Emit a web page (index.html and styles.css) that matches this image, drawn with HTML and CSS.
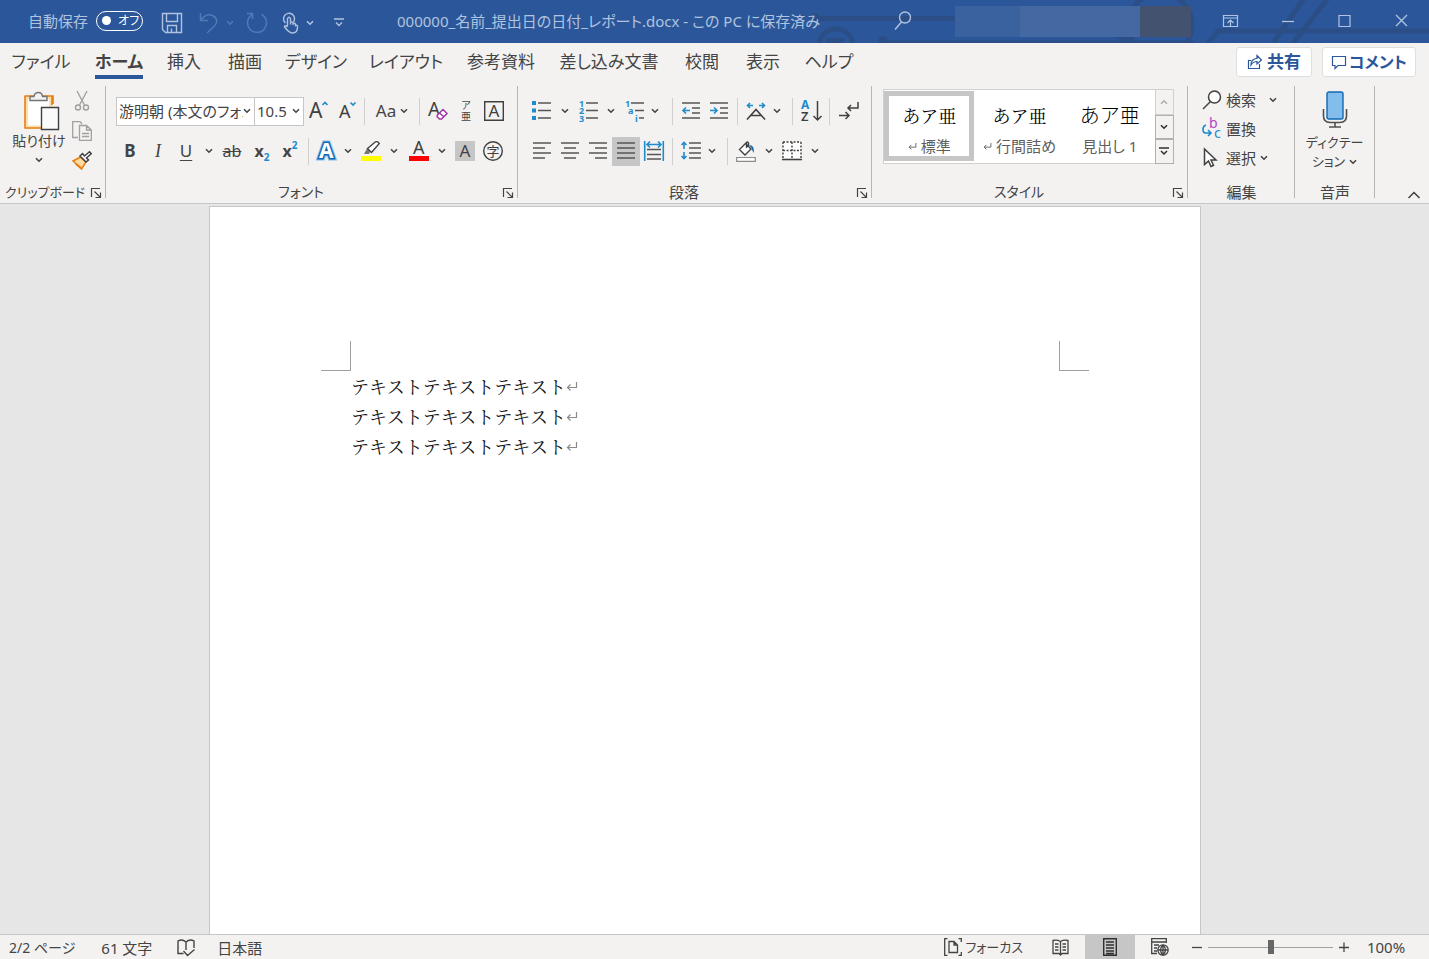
FILE: index.html
```html
<!DOCTYPE html>
<html lang="ja">
<head>
<meta charset="utf-8">
<title>000000_名前_提出日の日付_レポート.docx</title>
<link rel="stylesheet" href="styles.css">
</head>
<body>
<svg class="defs" aria-hidden="true">
  <symbol id="chev" viewBox="0 0 8 6"><path d="M1 1.2 4 4.2 7 1.2" fill="none" stroke="currentColor" stroke-width="1.6"/></symbol>
  <symbol id="launch" viewBox="0 0 12 12"><path d="M1.5 10V1.500H10M4.500 4.500 10 10M10.500 5.500V10.500H5.500" fill="none" stroke="currentColor" stroke-width="1.200"/></symbol>
  <symbol id="ret" viewBox="0 0 12 10"><path d="M10.500 1V6.500H1.500M4.500 3.500 1.500 6.500 4.500 9.500" fill="none" stroke="currentColor" stroke-width="1.200"/></symbol>
</svg>

<header class="titlebar">
  <svg class="circuit" width="614" height="43" viewBox="0 0 614 43" fill="none" stroke="#2b4e86" stroke-width="5" aria-hidden="true">
    <path d="M-1 18.500H180M72 43 75 43H380"/>
    <circle cx="0" cy="18" r="5" fill="#2b4e86" stroke="none"/>
    <circle cx="21" cy="46" r="17"/><path d="M11 40.500H29"/>
    <circle cx="68" cy="41" r="5" fill="#2b4e86" stroke="none"/>
    <circle cx="345" cy="25" r="32"/><path d="M325 48 300 34"/>
    <path d="M393 43 403 31H614M458 43 490-3M478 43 514-3"/>
  </svg>
  <div class="quick">
    <label class="autosave">自動保存
      <span class="toggle"><input type="checkbox">オフ</span>
    </label>
    <button class="tb" aria-label="上書き保存"><svg width="22" height="22" fill="none" stroke="currentColor" stroke-width="1.400"><path d="M1.500 1.500H20.500V20.500H4.500L1.500 17.500ZM5.500 1.500V9.500H16.500V1.500M6.500 20V13.500H15.500V20M10.500 20V16.500"/></svg></button>
    <button class="tb dim undo" aria-label="元に戻す"><svg width="20" height="22" fill="none" stroke="currentColor" stroke-width="1.500"><path d="M1.500 1V8.500H9M1.500 8.500C5 4 9 1.500 13.500 3.500 18.500 6 19 10.500 15.500 14L8 21"/></svg><svg class="chev"><use href="#chev"/></svg></button>
    <button class="tb dim redo" aria-label="やり直し"><svg width="22" height="22" fill="none" stroke="currentColor" stroke-width="1.500"><path d="M1 1.500H6.500V7M6.500 2.500A9.500 9.500 0 1 0 15.500 2.500"/></svg></button>
    <button class="tb touch" aria-label="タッチ/マウス モード"><svg width="17" height="22" fill="none" stroke="currentColor" stroke-width="1.400"><path d="M3.500 11A5.500 5.500 0 1 1 11.500 10"/><path d="M5.500 14V6.500Q7 4 8.500 6.500V12.500M8.500 10.500Q10 9 11 11V13M11 11.500Q13 10.500 13.500 12.500V13.500Q15.500 12.500 15.500 15C15.500 19 14 21 10.500 21 7 21 6 19 2.500 15Q2.500 12.500 5.500 15"/></svg><svg class="chev"><use href="#chev"/></svg></button>
    <button class="tb more" aria-label="クイック アクセスのカスタマイズ"><svg width="10" height="9" fill="none" stroke="currentColor" stroke-width="1.400"><path d="M0 1H10M2 4.500 5 7.500 8 4.500"/></svg></button>
  </div>
  <div class="doc-title">000000_名前_提出日の日付_レポート.docx - この PC に保存済み</div>
  <div class="win">
    <button class="tb search" aria-label="検索"><svg width="18" height="20" fill="none" stroke="currentColor" stroke-width="1.400"><circle cx="11" cy="6.500" r="5.500"/><path d="M7.500 11 1 18.500"/></svg></button>
    <div class="account"><i class="a1"></i><i class="a2"></i><i class="a3"></i></div>
    <button class="tb ctl" aria-label="リボンの表示オプション"><svg width="17" height="14" fill="none" stroke="currentColor" stroke-width="1.200"><path d="M1.500 1.500H15.500V12.500H1.500ZM1.500 4H15.500M8.500 12V6.500M5.500 9 8.500 6 11.500 9"/></svg></button>
    <button class="tb ctl" aria-label="最小化"><svg width="12" height="12" stroke="currentColor" stroke-width="1.300"><path d="M0 6.500H12"/></svg></button>
    <button class="tb ctl" aria-label="最大化"><svg width="13" height="14" fill="none" stroke="currentColor" stroke-width="1.200"><path d="M1 1.500H12V12.500H1Z"/></svg></button>
    <button class="tb ctl" aria-label="閉じる"><svg width="13" height="13" stroke="currentColor" stroke-width="1.300"><path d="M1 1 12 12M12 1 1 12"/></svg></button>
  </div>
</header>

<nav class="tabs">
  <div class="tablist">
    <button>ファイル</button><button class="active">ホーム</button><button>挿入</button><button>描画</button><button>デザイン</button><button>レイアウト</button><button>参考資料</button><button>差し込み文書</button><button>校閲</button><button>表示</button><button>ヘルプ</button>
  </div>
  <div class="actions">
    <button><svg width="16" height="16" fill="none" stroke="currentColor" stroke-width="1.200"><path d="M4 6.500H1.500V14.500H12.500V10M4 11C4 7 6 4.500 10 4.500V1.500L14.500 6 10 10V7.500C7 7.500 5.500 8.500 4 11Z"/></svg>共有</button>
    <button><svg width="16" height="16" fill="none" stroke="currentColor" stroke-width="1.200"><path d="M1.500 2.500H14.500V11.500H7L4 14.500V11.500H1.500Z"/></svg>コメント</button>
  </div>
</nav>

<main class="ribbon">
  <section class="group g-clip">
    <div class="body">
      <button class="paste"><svg class="board" width="36" height="40" fill="none"><path d="M2.500 6.500H26.500V36H2.500Z" fill="#fff" stroke="#fce0a8" stroke-width="3"/><path d="M1 5H29V13M1 4.500V37H17M28 5V14" stroke="#e67e17" stroke-width="1.600"/><path d="M6 9.500V5.500H10Q10.500 1.500 14.500 1.500 18 1.500 18.500 5.500H23V9.500Z" fill="#f3f2f1" stroke="#767676" stroke-width="1.400"/><path d="M17.500 16.500H34.500V38.500H17.500Z" fill="#fafafa" stroke="#404040" stroke-width="1.400"/></svg><span>貼り付け</span><svg class="chev"><use href="#chev"/></svg></button>
      <div class="clip-tools">
        <button aria-label="切り取り"><svg width="20" height="20" fill="none" stroke="#a0a0a0" stroke-width="1.400"><path d="M5 0 12.500 14M15 0 7.500 14"/><circle cx="6" cy="16.500" r="2.500"/><circle cx="14" cy="16.500" r="2.500"/></svg></button>
        <button aria-label="コピー"><svg width="20" height="20" fill="none" stroke="#a0a0a0" stroke-width="1.300"><path d="M6 16.500H.7V.7H8L10 3"/><path d="M7.500 4.500H14.500L19.300 9V19.300H7.500ZM14.500 4.500V9H19M10 12.500H17M10 15.500H17"/></svg></button>
        <button aria-label="書式のコピー"><svg width="20" height="19" fill="none" stroke-width="1.500"><path d="M1 10 8.500 6 14 11 9.500 18Z" fill="#fbdc9d" stroke="#e67e17"/><path d="M4 13 9 17" stroke="#e67e17" stroke-width="2"/><path d="M8 5 10.500 2.500 12.500 5 17.500.8 19.200 2.800 14.500 7 16.500 9 14 11Z" fill="#fff" stroke="#404040"/></svg></button>
      </div>
    </div>
    <footer>クリップボード<button aria-label="クリップボードの設定"><svg width="12" height="12"><use href="#launch"/></svg></button></footer>
  </section>

  <section class="group g-font">
    <div class="body rows">
      <div class="row">
        <div class="combo face"><select aria-label="フォント"><option>游明朝 (本文のフォント)</option></select><svg class="chev"><use href="#chev"/></svg></div>
        <div class="combo size"><select aria-label="フォント サイズ"><option>10.5</option></select><svg class="chev"><use href="#chev"/></svg></div>
        <button class="ic" aria-label="フォント サイズの拡大"><svg width="20" height="24"><text x="1" y="19" font-size="21">A</text><path d="M14.500 6 17 3.500 19.500 6" class="bl"/></svg></button>
        <button class="ic" aria-label="フォント サイズの縮小"><svg width="20" height="24"><text x="3" y="19" font-size="18">A</text><path d="M14.500 3.500 17 6 19.500 3.500" class="bl"/></svg></button>
        <span class="sep"></span>
        <button class="wide" aria-label="文字種の変換"><span class="aa">Aa</span><svg class="chev"><use href="#chev"/></svg></button>
        <span class="sep"></span>
        <button class="ic" aria-label="書式のクリア"><svg width="20" height="22"><text x="0" y="16" font-size="19">A</text><path d="M9.500 15 15 9.500 19 13.500 13.500 19H11.500L9 16.500ZM11.500 13 16 17" fill="#fff" stroke="#a238a5" stroke-width="1.500"/></svg></button>
        <button class="ic ruby"><span>ア</span><span>亜</span></button>
        <button class="ic" aria-label="囲み線"><svg width="20" height="20"><path d="M.7.700H19.300V19.300H.7Z" fill="none" stroke="#404040" stroke-width="1.400"/><text x="4.500" y="16" font-size="17">A</text></svg></button>
      </div>
      <div class="row">
        <button class="ic b">B</button><button class="ic i">I</button><button class="ic u">U</button><button class="dd" aria-label="下線の種類"><svg class="chev"><use href="#chev"/></svg></button>
        <button class="ic s">ab</button><button class="ic x g2">x<sub>2</sub></button><button class="ic x">x<sup>2</sup></button>
        <span class="sep"></span>
        <button class="ic" aria-label="文字の効果"><svg width="20" height="22"><text class="glow" x="2" y="18">A</text><text class="outline" x="2" y="18">A</text></svg></button><button class="dd n" aria-label="文字の効果の一覧"><svg class="chev"><use href="#chev"/></svg></button>
        <button class="ic g2" aria-label="蛍光ペン"><svg width="20" height="21"><path d="M0 15H20V20H0Z" fill="#ff0"/><path d="M3 13 6 7.500 9 11 8 13Z" fill="#767676"/><path d="M6.500 7.500 14.500.8Q17 0 18.300 2.500L10.500 11.500Z" fill="#fff" stroke="#404040" stroke-width="1.400"/></svg></button><button class="dd" aria-label="蛍光ペンの色"><svg class="chev"><use href="#chev"/></svg></button>
        <button class="ic g2" aria-label="フォントの色"><svg width="20" height="21"><text x="4" y="13" font-size="18">A</text><path d="M0 15H20V20H0Z" fill="#f00"/></svg></button><button class="dd" aria-label="フォントの色の一覧"><svg class="chev"><use href="#chev"/></svg></button>
        <button class="ic" aria-label="文字の網かけ"><svg width="20" height="20"><path d="M0 0H20V20H0Z" fill="#c6c6c6"/><text x="4.500" y="16" font-size="17">A</text></svg></button>
        <button class="ic" aria-label="囲い文字"><svg width="20" height="20"><circle cx="10" cy="10" r="9.300" fill="none" stroke="#404040" stroke-width="1.400"/><text x="3.500" y="15" font-size="13">字</text></svg></button>
      </div>
    </div>
    <footer><span class="kana">フォント</span><button aria-label="フォントの設定"><svg width="12" height="12"><use href="#launch"/></svg></button></footer>
  </section>

  <section class="group g-para">
    <div class="body rows">
      <div class="row">
        <button class="ic" aria-label="箇条書き"><svg width="20" height="20"><path d="M0 0H4V4H0ZM0 7.500H4V11.500H0ZM0 15H4V19H0Z" fill="#1e8bcd"/><path d="M6 2H19M6 9.500H19M6 17H19" class="ln"/></svg></button><button class="dd" aria-label="行頭文字"><svg class="chev"><use href="#chev"/></svg></button>
        <button class="ic" aria-label="段落番号"><svg width="20" height="22"><g class="num"><text x="1" y="7">1</text><text x="1" y="14">2</text><text x="1" y="21.500">3</text></g><path d="M8 3H20M8 10.500H20M8 18H20" class="ln"/></svg></button><button class="dd" aria-label="番号書式"><svg class="chev"><use href="#chev"/></svg></button>
        <button class="ic" aria-label="アウトライン"><svg width="20" height="22"><g class="num"><text x="1" y="7">1</text><text x="4" y="14">a</text><text x="11" y="21.500">i</text></g><path d="M7 3H20M11 10.500H20M15 18H20" class="ln"/></svg></button><button class="dd n" aria-label="リスト"><svg class="chev"><use href="#chev"/></svg></button>
        <span class="sep wider"></span>
        <button class="ic" aria-label="インデントを減らす"><svg width="20" height="20"><path d="M1 2H19M11 7H19M11 12H19M1 17H19" class="ln"/><path d="M9 9.500H2M5 6.500 2 9.500 5 12.500" class="bl"/></svg></button>
        <button class="ic" aria-label="インデントを増やす"><svg width="20" height="20"><path d="M1 2H19M11 7H19M11 12H19M1 17H19" class="ln"/><path d="M1 9.500H8M5 6.500 8 9.500 5 12.500" class="bl"/></svg></button>
        <span class="sep"></span>
        <button class="ic" aria-label="拡張書式"><svg width="20" height="20"><path d="M1 18.500 10 8.500 19 18.500M5 14.500H15" fill="none" stroke="#404040" stroke-width="1.600"/><path d="M7 4.500H1.500M4 2 1.500 4.500 4 7M13 4.500H18.500M16 2 18.500 4.500 16 7" class="bl"/></svg></button><button class="dd n" aria-label="拡張書式の一覧"><svg class="chev"><use href="#chev"/></svg></button>
        <span class="sep far"></span>
        <button class="ic" aria-label="並べ替え"><svg width="21" height="22"><text class="az" x="0" y="9" font-size="12" font-weight="700">A</text><text x="0" y="21" font-size="13" font-weight="600">Z</text><path d="M16.500 1V20M12.500 16 16.500 20 20.500 16" class="dk"/></svg></button>
        <span class="sep"></span>
        <button class="ic" aria-label="編集記号"><svg width="21" height="20"><path d="M20 1V7H10M13 4 10 7 13 10M1 14.500H11M7.500 11 11 14.500 7.500 18" class="dk"/></svg></button>
      </div>
      <div class="row">
        <button class="ic" aria-label="左揃え"><svg width="20" height="20"><path d="M1 2H19M1 7H13M1 12H19M1 17H13" class="ln"/></svg></button>
        <button class="ic" aria-label="中央揃え"><svg width="20" height="20"><path d="M1 2H19M4 7H16M1 12H19M4 17H16" class="ln"/></svg></button>
        <button class="ic" aria-label="右揃え"><svg width="20" height="20"><path d="M1 2H19M7 7H19M1 12H19M7 17H19" class="ln"/></svg></button>
        <button class="ic on" aria-label="両端揃え"><svg width="20" height="20"><path d="M1 2H19M1 7H19M1 12H19M1 17H19" class="ln"/></svg></button>
        <button class="ic" aria-label="均等割り付け"><svg width="20" height="20"><path d="M3 8.500H17M3 13.500H17M3 18H17" class="ln"/><path d="M.7 0V20M19.300 0V20M3 3.500H17M6 .5 3 3.500 6 6.500M14 .5 17 3.500 14 6.500" class="bl"/></svg></button>
        <span class="sep"></span>
        <button class="ic" aria-label="行間"><svg width="20" height="20"><path d="M8 2H20M8 7H20M8 12H20M8 17H20" class="ln"/><path d="M3 1.500V8M.5 4 3 1.500 5.500 4M3 11V17.500M.5 15 3 17.500 5.500 15" class="bl"/></svg></button><button class="dd n" aria-label="行間の一覧"><svg class="chev"><use href="#chev"/></svg></button>
        <span class="sep far"></span>
        <button class="ic" aria-label="塗りつぶし"><svg width="20" height="21"><path d="M.7 16.500H19.300V20.300H.7Z" fill="#fff" stroke="#8a8a8a" stroke-width="1.200"/><path d="M3.500 8.500 9.500 2.500 15 8 9 14ZM10.500 7V1.500Q11.500 0 12.500 2V5" fill="#fff" stroke="#404040" stroke-width="1.400"/><path d="M13 4Q19 4 17.500 12 16 9 15.500 7Z" fill="#1168b3"/></svg></button><button class="dd" aria-label="塗りつぶしの色"><svg class="chev"><use href="#chev"/></svg></button>
        <button class="ic" aria-label="罫線"><svg width="20" height="20"><path d="M1 1H19V18H1Z" fill="#fff"/><path d="M1 1H19M1 9.500H19M1 1V17M10 1V17M19 1V17" fill="none" stroke="#404040" stroke-width="1.400" stroke-dasharray="2 1.500"/><path d="M0 18.500H20" stroke="#404040" stroke-width="1.600"/></svg></button><button class="dd" aria-label="罫線の一覧"><svg class="chev"><use href="#chev"/></svg></button>
      </div>
    </div>
    <footer>段落<button aria-label="段落の設定"><svg width="12" height="12"><use href="#launch"/></svg></button></footer>
  </section>

  <section class="group g-style">
    <div class="body">
      <div class="gallery">
        <button class="style cur"><span class="pv">あア亜</span><span class="nm"><svg width="9" height="8"><use href="#ret"/></svg>標準</span></button>
        <button class="style"><span class="pv">あア亜</span><span class="nm"><svg width="9" height="8"><use href="#ret"/></svg>行間詰め</span></button>
        <button class="style"><span class="pv head">あア亜</span><span class="nm">見出し 1</span></button>
        <div class="scroll">
          <button class="off" aria-label="上へ"><svg class="chev up"><use href="#chev"/></svg></button>
          <button aria-label="下へ"><svg class="chev"><use href="#chev"/></svg></button>
          <button aria-label="その他"><svg width="10" height="9" fill="none" stroke="currentColor" stroke-width="1.500"><path d="M0 1H10M2 4 5 7 8 4"/></svg></button>
        </div>
      </div>
    </div>
    <footer><span class="kana">スタイル</span><button aria-label="スタイルの設定"><svg width="12" height="12"><use href="#launch"/></svg></button></footer>
  </section>

  <section class="group g-edit">
    <div class="body list">
      <button class="find"><svg width="20" height="20" fill="#fff" stroke="#404040" stroke-width="1.500"><circle cx="12.500" cy="7" r="6"/><path d="M8.500 11.500 1 19"/></svg>検索<svg class="chev"><use href="#chev"/></svg></button>
      <button><svg class="swap" width="20" height="22"><text class="from" x="7" y="10">b</text><text class="to" x="12" y="20">c</text><path d="M4 7C0 8 0 15 4 15H9M6 12 9 15 6 18" class="bl"/></svg>置換</button>
      <button class="pick"><svg width="20" height="20"><path d="M2.500 1V16.500L6.500 13 9 18.500 11.500 17.300 9 12H14Z" fill="#fff" stroke="#404040" stroke-width="1.500"/></svg>選択<svg class="chev"><use href="#chev"/></svg></button>
    </div>
    <footer>編集</footer>
  </section>

  <section class="group g-voice">
    <div class="body">
      <button class="mic"><svg width="26" height="38" fill="none"><path d="M1.500 18V25Q1.500 31.500 8 31.500H18Q24.500 31.500 24.500 25V18M13 32V35.500M7 36H19" stroke="#505050" stroke-width="1.600"/><rect x="5" y="1" width="16" height="27" rx="2" fill="#83bdec" stroke="#1168b3" stroke-width="1.400"/></svg><span>ディクテー</span><span>ション<svg class="chev"><use href="#chev"/></svg></span></button>
    </div>
    <footer>音声</footer>
  </section>
  <button class="collapse" aria-label="リボンを折りたたむ"><svg width="14" height="8" fill="none" stroke="#404040" stroke-width="1.500"><path d="M1.500 7 7 1.500 12.500 7"/></svg></button>
</main>

<section class="canvas">
  <article class="page">
    <div class="marks"><i class="ml"></i><i class="mr"></i></div>
    <p>テキストテキストテキスト<svg width="12" height="10"><use href="#ret"/></svg></p>
    <p>テキストテキストテキスト<svg width="12" height="10"><use href="#ret"/></svg></p>
    <p>テキストテキストテキスト<svg width="12" height="10"><use href="#ret"/></svg></p>
  </article>
</section>

<footer class="status">
  <button class="pages">2/2 ページ</button>
  <button class="count">61 文字</button>
  <button class="proof" aria-label="文章校正"><svg width="18" height="18" fill="none" stroke="currentColor" stroke-width="1.400"><path d="M9 11V3Q5-.5 1 2V14.500H6.500M9 3Q13-.5 17 2V9M6.500 12 10.500 16.500 17.500 10.500"/></svg></button>
  <button class="lang">日本語</button>
  <div class="views">
    <button class="focus"><svg width="18" height="18" fill="none" stroke="currentColor" stroke-width="1.300"><path d="M3.500.7H.7V17.300H3.500M14.500.7H17.300V4M17.300 14V17.300H14.500M5 3.500H10L13.500 7V14.500H5ZM10 3.500V7H13.500"/></svg>フォーカス</button>
    <button class="view" aria-label="閲覧モード"><svg width="17" height="17" fill="none" stroke="currentColor" stroke-width="1.300"><path d="M8.500 15V2.500Q5 .5 1 1.500V14.500H7L8.500 16 10 14.500H16V1.500Q12 .5 8.500 2.500M3 5H6.500M3 8H6.500M3 11H6.500M10.500 5H14M10.500 8H14M10.500 11H14"/></svg></button>
    <button class="view sel" aria-label="印刷レイアウト"><svg width="14" height="18" fill="none" stroke="#303030" stroke-width="1.400"><path d="M.7.700H13.300V17.300H.7ZM3 4H11M3 7H11M3 10H11M3 13H11M3 15.500H11"/></svg></button>
    <button class="view" aria-label="Web レイアウト"><svg width="18" height="18" fill="none" stroke="currentColor" stroke-width="1.300"><path d="M6 15.500H.7V.7H15.300V5M.7 4H15M3 7H8M3 10H6M3 13H6"/><circle cx="12" cy="12" r="5.200"/><path d="M7 12H17M12 7V17M12 7Q7 12 12 17Q17 12 12 7"/></svg></button>
    <div class="zoom"><button aria-label="縮小"><svg width="10" height="10" stroke="currentColor" stroke-width="1.300"><path d="M0 5.500H10"/></svg></button><input type="range" min="0" max="100" value="50" aria-label="ズーム"><button aria-label="拡大"><svg width="10" height="10" stroke="currentColor" stroke-width="1.300"><path d="M0 5.500H10M5 .5V10"/></svg></button></div>
    <button class="pct">100%</button>
  </div>
</footer>
</body>
</html>
```
FILE: styles.css
```css
* { box-sizing: border-box; }
body {
  margin: 0;
  height: 100vh;
  display: flex;
  flex-direction: column;
  overflow: hidden;
  background: #f3f2f1;
  color: #444;
  font: 15px/20px "Noto Sans", "Noto Sans CJK JP", sans-serif;
  font-feature-settings: "palt";
}
button, select, input { font: inherit; font-feature-settings: inherit; color: inherit; margin: 0; padding: 0; border: 0; background: none; }
button { display: flex; align-items: center; justify-content: center; white-space: nowrap; }
svg { flex: none; display: block; overflow: visible; }
svg text { fill: #404040; }
.defs { position: absolute; width: 0; height: 0; }
.chev { width: 8px; height: 6px; }

/* title bar */
.titlebar { position: relative; z-index: 0; flex: none; height: 43px; padding-bottom: 2px; display: flex; align-items: center; background: #2b579a; color: #b0c3df; overflow: hidden; }
.circuit { position: absolute; z-index: -1; right: 0; top: 0; }
.quick { display: flex; align-items: center; width: 397px; padding-left: 28px; }
.autosave { display: flex; align-items: center; gap: 8px; line-height: 20px; }
.toggle { display: flex; align-items: center; gap: 7px; width: 47px; height: 20px; padding-left: 5px; border: 1px solid #fff; border-radius: 10px; color: #fff; font-size: 12px; line-height: 18px; }
.toggle input { appearance: none; width: 9px; height: 9px; border-radius: 50%; background: #fff; }
.tb { gap: 7px; height: 43px; }
.quick .tb { margin-left: 18px; padding-top: 4px; }
.dim { color: #5279b4; }
.quick .undo { margin-left: 16px; }
.quick .redo { margin-left: 12px; }
.quick .touch { margin-left: 14px; }
.quick .more { margin-left: 20px; }
.doc-title { white-space: nowrap; }
.win { margin-left: auto; display: flex; align-items: center; }
.search { margin-right: 43px; }
.account { display: flex; width: 236px; height: 31px; margin: 2px 11px 0 0; }
.a1 { width: 65px; background: #3a629f; }
.a2 { width: 120px; background: #4468a2; }
.a3 { width: 51px; background: #43526e; }
.ctl { width: 57px; }
.ctl:last-child { width: 56px; }

/* tabs */
.tabs { flex: none; display: flex; justify-content: space-between; height: 41px; padding: 0 13px 0 3px; }
.tablist { display: grid; grid-template-columns: 76px 80px 50px 72px 70px 110px 80px 136px 50px 72px 60px; font-size: 17px; line-height: 24px; }
.tablist button { height: 36px; padding-top: 6px; justify-self: center; border-bottom: 4px solid transparent; }
.tablist .active { font-weight: 700; border-color: #2b579a; }
.actions { display: flex; gap: 10px; padding-top: 4px; }
.actions button { height: 30px; gap: 4px; padding: 0 8px; min-width: 76px; border: 1px solid #e1dfdd; border-radius: 3px; background: #fff; color: #2b579a; font-size: 17px; font-weight: 700; }
.actions button:last-child { min-width: 94px; padding: 0 7px; gap: 2px; font-size: 16px; }

/* ribbon */
.ribbon { flex: none; display: flex; height: 120px; padding-top: 2px; border-bottom: 1px solid #c8c6c4; }
.group { flex: none; background: linear-gradient(#b8b6b4, #b8b6b4) right top / 1px 112px no-repeat; }
.body { display: flex; height: 94px; }
.group footer { position: relative; display: flex; justify-content: center; height: 24px; line-height: 24px; }
.group footer button { position: absolute; right: 4px; top: 7px; }
.kana { font-size: 14px; }
.g-clip { width: 106px; }
.g-clip footer { justify-content: flex-start; padding-left: 5px; font-size: 13px; }
.g-font { width: 412px; }
.g-font footer { padding-right: 22px; }
.g-para { width: 354px; }
.g-para footer { padding-right: 22px; }
.g-style { width: 316px; }
.g-style footer { padding-right: 22px; }
.g-edit { width: 107px; }
.g-voice { width: 80px; }

.paste { flex-direction: column; justify-content: flex-start; width: 56px; margin-left: 11px; padding-top: 5px; font-size: 14px; }
.board { margin-left: 6px; }
.paste .chev { margin-top: 6px; }
.clip-tools { display: flex; flex-direction: column; gap: 10px; padding: 5px 0 0 5px; }

.rows { flex-direction: column; padding: 5px 0 0 10px; }
.row { display: flex; align-items: center; height: 40px; }
.combo { display: flex; align-items: center; height: 29px; padding: 0 3px 0 2px; border: 1px solid #c8c6c4; background: #fff; }
.combo select { appearance: none; flex: 1; min-width: 0; overflow: hidden; text-overflow: clip; white-space: nowrap; }
.face { width: 139px; }
.size { width: 50px; margin-left: -1px; }
.ic { width: 28px; height: 29px; }
.dd { width: 18px; height: 29px; }
.dd.n { width: 14px; }
.g2 { margin-left: 2px; }
.sep { width: 1px; height: 27px; margin: 0 4px; background: #d2d0ce; }
.sep.far { margin-left: 8px; }
.sep.wider { margin-left: 10px; }
.wide { width: 46px; gap: 4px; }
.aa { font-size: 17px; }
.on { background: #c6c6c6; }
.ruby { flex-direction: column; font-size: 10px; line-height: 11px; }
.b { font-weight: 700; font-size: 17px; }
.i { font: italic 18px "Liberation Serif", serif; }
.u { text-decoration: underline; text-underline-offset: 3px; font-size: 17px; }
.s { text-decoration: line-through; font-size: 16px; }
.x { font-weight: 700; font-size: 16px; }
.x sub, .x sup { color: #1e8bcd; font-size: 10px; line-height: 10px; }
.x sub { padding-top: 12px; }
.x sup { padding-bottom: 12px; }
.ln { fill: none; stroke: #555; stroke-width: 1.5; }
.dk { fill: none; stroke: #404040; stroke-width: 1.5; }
.bl { fill: none; stroke: #1e8bcd; stroke-width: 1.6; }
.num text { fill: #1e8bcd; font-size: 9px; font-weight: 700; }
svg .az { fill: #1e8bcd; }
svg .glow { font-size: 21px; font-weight: 700; fill: #8cc5f0; stroke: #8cc5f0; stroke-width: 5; }
svg .outline { font-size: 21px; font-weight: 700; fill: #fff; stroke: #1168b3; stroke-width: 3; paint-order: stroke; }

.gallery { display: flex; width: 291px; height: 75px; margin: 3px 0 0 11px; border: 1px solid #d2d0ce; background: #fff; }
.style { flex: 1; flex-direction: column; justify-content: flex-start; gap: 10px; height: 70px; margin-top: 1px; padding-top: 7px; color: #605e5c; border: 5px solid transparent; }
.cur { border-color: #c6c6c6; }
.pv { color: #000; font: 18px/24px "Noto Serif CJK JP", "Noto Serif JP", "Noto Sans CJK JP", serif; }
.pv.head { font: 300 20px/24px "Noto Sans CJK JP", sans-serif; }
.nm { display: flex; align-items: center; gap: 4px; line-height: 18px; }
.scroll { display: grid; grid-template-rows: 26px 24px 1fr; width: 19px; margin: -1px -1px -1px 0; color: #303030; }
.scroll button { border: 1px solid #b3b0ad; background: #f3f2f1; }
.scroll .off { color: #b0aeac; border-color: #d2d0ce; }
.up { transform: rotate(180deg); }

.list { flex-direction: column; padding-left: 14px; }
.list button { height: 29px; padding-bottom: 2px; gap: 4px; justify-content: flex-start; }
.find .chev { margin-left: 9px; }
.swap text { font-size: 14px; }
.swap .from { fill: #b146c2; }
.swap .to { fill: #1e8bcd; }
.mic { flex-direction: column; justify-content: flex-start; width: 79px; padding-top: 5px; font-size: 13px; line-height: 19px; }
.mic span { display: flex; align-items: center; gap: 4px; }
.mic svg + span { margin-top: 4px; }
.collapse { align-self: flex-end; margin: 0 8px 4px auto; }

/* document */
.canvas { flex: 1; min-height: 0; display: flex; justify-content: center; padding: 2px 19px 0 0; background: #e6e6e6; overflow: hidden; }
.page { width: 992px; border: 1px solid #c6c6c6; border-bottom: 0; background: #fff; padding: 134px 111px 0; color: #111; }
.marks { display: flex; justify-content: space-between; height: 30px; }
.marks i { width: 30px; border: 0 solid #a0a0a0; border-bottom-width: 1px; }
.marks .ml { border-right-width: 1px; }
.marks .mr { border-left-width: 1px; }
.page p { display: flex; align-items: center; margin: 0 0 0 30px; font: 18px/30px "Noto Serif CJK JP", "Noto Serif JP", "Noto Sans CJK JP", serif; font-feature-settings: normal; }
.page p svg { color: #8a8a8a; }

/* status bar */
.status { flex: none; display: flex; align-items: center; height: 25px; padding: 2px 0 0 9px; border-top: 1px solid #c6c6c6; }
.pages { min-width: 66px; justify-content: flex-start; font-size: 14px; }
.count { margin-left: 25px; min-width: 53px; }
.proof { margin-left: 24px; }
.lang { margin-left: 22px; }
.views { display: flex; align-items: center; margin: -2px 0 0 auto; height: 24px; }
.focus { gap: 3px; margin-right: 12px; font-size: 13px; }
.view { width: 50px; height: 24px; }
.sel { background: #c6c6c6; }
.zoom { display: flex; align-items: center; gap: 6px; margin-left: 7px; }
.zoom input { appearance: none; width: 125px; height: 14px; background: linear-gradient(#a0a0a0, #a0a0a0) center / 100% 1px no-repeat; }
.zoom input::-webkit-slider-thumb { appearance: none; width: 6px; height: 14px; background: #666; }
.pct { margin: 0 22px 0 16px; min-width: 42px; }
```
